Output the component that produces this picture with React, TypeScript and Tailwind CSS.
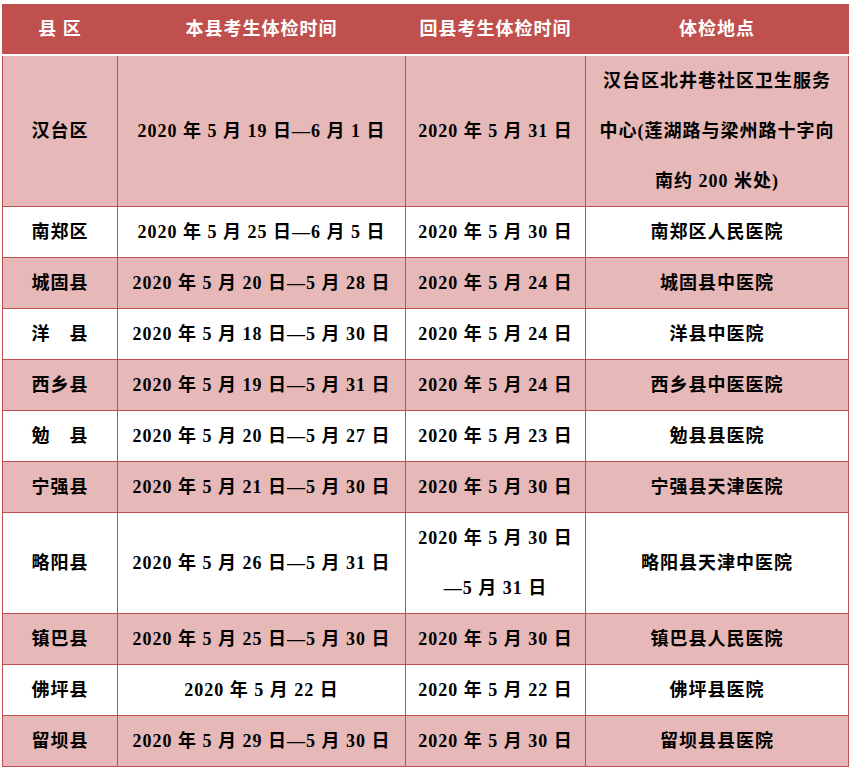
const rows: { county: string; local: string[]; back: string[]; place: string[]; pink: boolean }[] = [
  {
    county: '汉台区',
    local: ['2020 年 5 月 19 日—6 月 1 日'],
    back: ['2020 年 5 月 31 日'],
    place: ['汉台区北井巷社区卫生服务', '中心(莲湖路与梁州路十字向', '南约 200 米处)'],
    pink: true,
  },
  { county: '南郑区', local: ['2020 年 5 月 25 日—6 月 5 日'], back: ['2020 年 5 月 30 日'], place: ['南郑区人民医院'], pink: false },
  { county: '城固县', local: ['2020 年 5 月 20 日—5 月 28 日'], back: ['2020 年 5 月 24 日'], place: ['城固县中医院'], pink: true },
  { county: '洋　县', local: ['2020 年 5 月 18 日—5 月 30 日'], back: ['2020 年 5 月 24 日'], place: ['洋县中医院'], pink: false },
  { county: '西乡县', local: ['2020 年 5 月 19 日—5 月 31 日'], back: ['2020 年 5 月 24 日'], place: ['西乡县中医医院'], pink: true },
  { county: '勉　县', local: ['2020 年 5 月 20 日—5 月 27 日'], back: ['2020 年 5 月 23 日'], place: ['勉县县医院'], pink: false },
  { county: '宁强县', local: ['2020 年 5 月 21 日—5 月 30 日'], back: ['2020 年 5 月 30 日'], place: ['宁强县天津医院'], pink: true },
  {
    county: '略阳县',
    local: ['2020 年 5 月 26 日—5 月 31 日'],
    back: ['2020 年 5 月 30 日', '—5 月 31 日'],
    place: ['略阳县天津中医院'],
    pink: false,
  },
  { county: '镇巴县', local: ['2020 年 5 月 25 日—5 月 30 日'], back: ['2020 年 5 月 30 日'], place: ['镇巴县人民医院'], pink: true },
  { county: '佛坪县', local: ['2020 年 5 月 22 日'], back: ['2020 年 5 月 22 日'], place: ['佛坪县医院'], pink: false },
  { county: '留坝县', local: ['2020 年 5 月 29 日—5 月 30 日'], back: ['2020 年 5 月 30 日'], place: ['留坝县县医院'], pink: true },
];

function Lines({ lines }: { lines: string[] }) {
  return (
    <>
      {lines.map((l) => (
        <div key={l} className="leading-[50px]">
          {l}
        </div>
      ))}
    </>
  );
}

export default function App() {
  return (
    <div className="w-[852px] h-[770px] bg-white pt-[4px] pl-[2px] font-['Liberation_Serif','Noto_Sans_CJK_SC',serif]">
      <table className="w-[846px] table-fixed border-collapse text-[18px] tracking-[1px] font-bold text-black">
        <colgroup>
          <col className="w-[115px]" />
          <col className="w-[288px]" />
          <col className="w-[180px]" />
          <col className="w-[263px]" />
        </colgroup>
        <thead>
          <tr className="h-[51px] bg-[#c0504d] text-white">
            <th className="border-x border-[#c0504d] border-b-2 border-b-white text-center font-bold">县 区</th>
            <th className="border-x border-[#c0504d] border-b-2 border-b-white text-center font-bold">本县考生体检时间</th>
            <th className="border-x border-[#c0504d] border-b-2 border-b-white text-center font-bold">回县考生体检时间</th>
            <th className="border-x border-[#c0504d] border-b-2 border-b-white text-center font-bold">体检地点</th>
          </tr>
        </thead>
        <tbody>
          {rows.map((r) => (
            <tr key={r.county} className={r.pink ? 'bg-[#e6b8b7]' : 'bg-white'}>
              <td className="border border-[#c0504d] text-center align-middle h-[51px]">{r.county}</td>
              <td className="border border-[#c0504d] text-center align-middle">
                <Lines lines={r.local} />
              </td>
              <td className="border border-[#c0504d] text-center align-middle">
                <Lines lines={r.back} />
              </td>
              <td className="border border-[#c0504d] text-center align-middle">
                <Lines lines={r.place} />
              </td>
            </tr>
          ))}
        </tbody>
      </table>
    </div>
  );
}
